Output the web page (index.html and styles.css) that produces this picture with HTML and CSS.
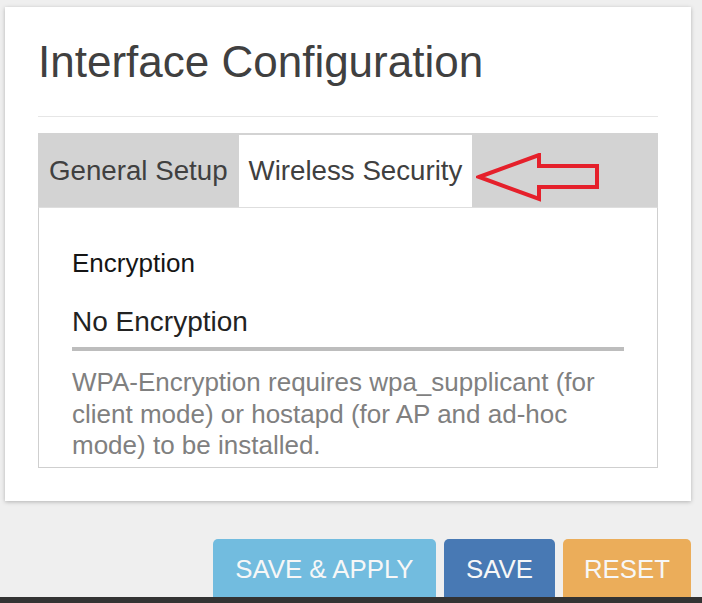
FILE: index.html
```html
<!DOCTYPE html>
<html lang="en">
<head>
<meta charset="utf-8">
<title>Interface Configuration</title>
<link rel="stylesheet" href="styles.css">
</head>
<body>
  <div class="page">
    <section class="card">
      <h2 class="card-title">Interface Configuration</h2>
      <hr class="divider">
      <div class="tabs">
        <div class="tab">General Setup</div>
        <div class="tab tab-active">Wireless Security</div>
        <svg class="callout-arrow" width="124" height="50" viewBox="0 0 124 50" aria-hidden="true">
          <polygon points="3,24 63,2 63,13 121,13 121,34 63,34 63,46" fill="none" stroke="#e5202b" stroke-width="4" stroke-linejoin="miter"/>
        </svg>
      </div>
      <div class="tab-panel">
        <div class="field-label">Encryption</div>
        <div class="field-value">No Encryption</div>
        <p class="field-help">WPA-Encryption requires wpa_supplicant (for client mode) or hostapd (for AP and ad-hoc mode) to be installed.</p>
      </div>
    </section>
    <div class="actions">
      <button class="btn btn-apply">SAVE &amp; APPLY</button>
      <button class="btn btn-save">SAVE</button>
      <button class="btn btn-reset">RESET</button>
    </div>
    <div class="bottom-bar"></div>
  </div>
</body>
</html>
```

FILE: styles.css
```css
* { box-sizing: border-box; }

html, body {
  margin: 0;
  padding: 0;
  background: #efefef;
  font-family: "Liberation Sans", Arial, sans-serif;
}

.page {
  width: 702px;
  height: 603px;
  overflow: hidden;
  padding-top: 7px;
}

.card {
  margin-left: 5px;
  width: 686px;
  height: 494px;
  background: #ffffff;
  box-shadow: 0 1px 4px rgba(0, 0, 0, 0.25);
  padding: 29px 33px 0 33px;
}

.card-title {
  margin: 0;
  font-size: 44px;
  line-height: 52px;
  font-weight: normal;
  color: #404040;
}

.divider {
  margin: 28px 0 0 0;
  border: 0;
  height: 1px;
  background: #e6e6e6;
}

.tabs {
  position: relative;
  margin-top: 16px;
  height: 74px;
  background: #d3d3d3;
  padding-top: 2px;
  display: flex;
}

.tab {
  height: 72px;
  padding: 0 11px;
  font-size: 27.7px;
  line-height: 72px;
  color: #404040;
}

.tab-active {
  background: #ffffff;
  padding: 0 10px;
}

.callout-arrow {
  position: absolute;
  left: 438px;
  top: 20px;
}

.tab-panel {
  height: 261px;
  border: 1px solid #cfcfcf;
  border-top-color: #dedede;
  padding: 39px 33px 0 33px;
}

.field-label {
  font-size: 26px;
  line-height: 32px;
  color: #151515;
}

.field-value {
  margin-top: 25px;
  font-size: 28px;
  line-height: 36px;
  color: #222222;
  padding-bottom: 7px;
  border-bottom: 4px solid #bdbdbd;
}

.field-help {
  margin: 16px 0 0 0;
  font-size: 26px;
  line-height: 31.5px;
  color: #808080;
}

.actions {
  margin-top: 38px;
  height: 58px;
  overflow: hidden;
  display: flex;
  justify-content: flex-end;
  align-items: flex-start;
  gap: 8px;
  padding-right: 11px;
}

.btn {
  height: 66px;
  border: 0;
  border-radius: 5px;
  padding: 0 22.5px 6px 22.5px;
  font-family: "Liberation Sans", Arial, sans-serif;
  font-size: 25.8px;
  line-height: 60px;
  color: #f7f7f7;
}

.btn-apply { background: #72bcdf; }
.btn-save { background: #4879b4; padding: 0 22px 6px 22px; }
.btn-reset { background: #ebad5a; padding: 0 21px 6px 21px; }

.bottom-bar {
  height: 6px;
  background: #333333;
}
```
